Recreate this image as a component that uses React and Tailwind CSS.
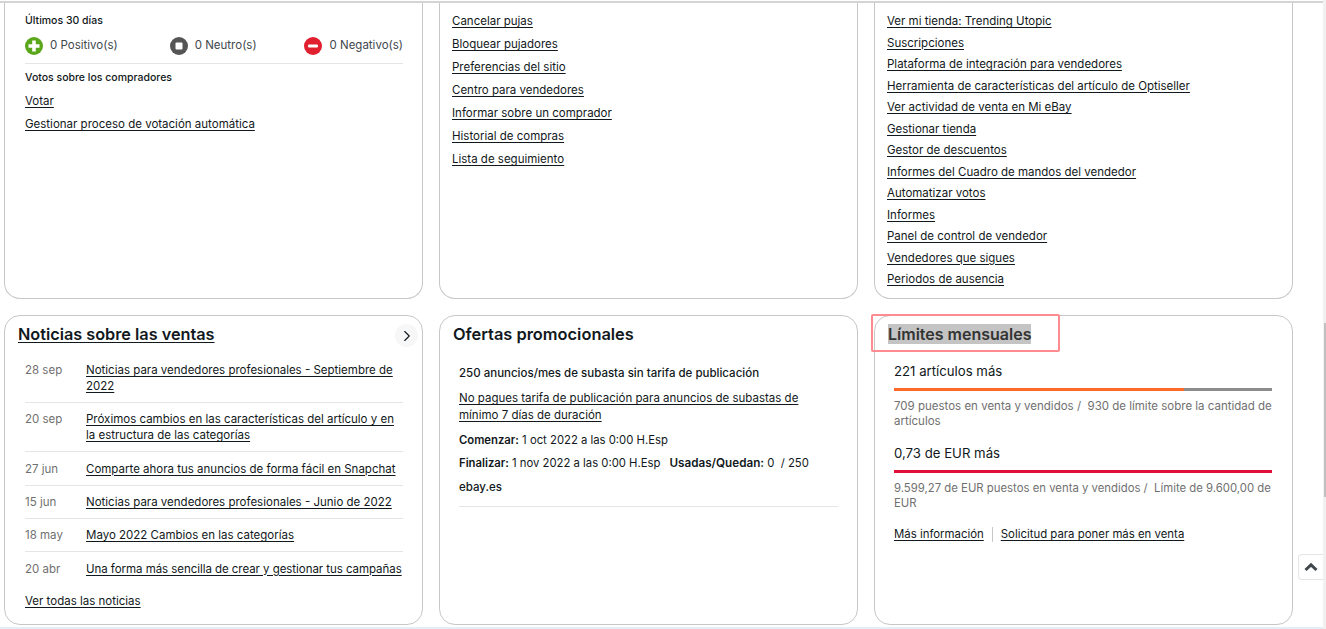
import React from "react";
import { ChevronRight } from "lucide-react";

const font = "font-['Inter','Liberation_Sans',sans-serif]";
const linkClass = "text-[11.5px] leading-[15px] text-[#111820] underline underline-offset-2";

const buyerLinks = [
  "Cancelar pujas",
  "Bloquear pujadores",
  "Preferencias del sitio",
  "Centro para vendedores",
  "Informar sobre un comprador",
  "Historial de compras",
  "Lista de seguimiento",
];

const sellerLinks = [
  "Ver mi tienda: Trending Utopic",
  "Suscripciones",
  "Plataforma de integración para vendedores",
  "Herramienta de características del artículo de Optiseller",
  "Ver actividad de venta en Mi eBay",
  "Gestionar tienda",
  "Gestor de descuentos",
  "Informes del Cuadro de mandos del vendedor",
  "Automatizar votos",
  "Informes",
  "Panel de control de vendedor",
  "Vendedores que sigues",
  "Periodos de ausencia",
];

const news = [
  { date: "28 sep", title: "Noticias para vendedores profesionales - Septiembre de 2022" },
  { date: "20 sep", title: "Próximos cambios en las características del artículo y en la estructura de las categorías" },
  { date: "27 jun", title: "Comparte ahora tus anuncios de forma fácil en Snapchat" },
  { date: "15 jun", title: "Noticias para vendedores profesionales - Junio de 2022" },
  { date: "18 may", title: "Mayo 2022 Cambios en las categorías" },
  { date: "20 abr", title: "Una forma más sencilla de crear y gestionar tus campañas", nowrap: true },
];

const Vote = ({ color, label, kind }) => (
  <div className="flex items-center gap-[7px]">
    <svg width="18" height="18" viewBox="0 0 18 18">
      <circle cx="9" cy="9" r="9" fill={color} />
      {kind === "plus" && <path d="M7.2 3.5h3.6v3.7h3.7v3.6h-3.7v3.7H7.2v-3.7H3.5V7.2h3.7z" fill="#fff" />}
      {kind === "stop" && <rect x="5.5" y="5.5" width="7" height="7" rx="1" fill="#fff" />}
      {kind === "minus" && <rect x="4" y="7.5" width="10" height="3" rx="1" fill="#fff" />}
    </svg>
    <span className="text-[11.5px] text-[#41474d]">{label}</span>
  </div>
);

const cardClass = "border border-[#c7c7c7] bg-white";

export default function App() {
  return (
    <div className={`relative h-[629px] w-[1326px] overflow-hidden bg-white ${font}`}>
      <div className="h-[3px] border-b-2 border-[#d4d4d4]" />

      <div className="grid w-[1293px] grid-cols-3 gap-x-4 gap-y-4 pl-1 grid-rows-[296px_310px]">
        {/* Feedback */}
        <section className={`${cardClass} rounded-b-2xl border-t-0 pt-[11px] pr-[19px] pl-5`}>
          <p className="text-[10.5px] leading-[14px] font-medium text-[#111820]">Últimos 30 días</p>
          <div className="mt-[9px] flex border-b border-[#e5e5e5] pb-[8px]">
            <Vote color="#5ba71b" kind="plus" label="0 Positivo(s)" />
            <div className="ml-[52px]">
              <Vote color="#555555" kind="stop" label="0 Neutro(s)" />
            </div>
            <div className="ml-auto">
              <Vote color="#e0202f" kind="minus" label="0 Negativo(s)" />
            </div>
          </div>
          <p className="mt-[7px] text-[10.5px] leading-[14px] font-medium text-[#111820]">Votos sobre los compradores</p>
          <div className="mt-[9px] flex flex-col gap-[8px]">
            <a className={linkClass}>Votar</a>
            <a className={linkClass}>Gestionar proceso de votación automática</a>
          </div>
        </section>

        {/* Buyer links */}
        <section className={`${cardClass} rounded-b-2xl border-t-0 px-[12px] pt-[11px]`}>
          <div className="flex flex-col items-start gap-[8px]">
            {buyerLinks.map((l) => (
              <a key={l} className={linkClass}>{l}</a>
            ))}
          </div>
        </section>

        {/* Seller links */}
        <section className={`${cardClass} rounded-b-2xl border-t-0 px-[12px] pt-[11px]`}>
          <div className="flex flex-col items-start gap-[6.5px]">
            {sellerLinks.map((l) => (
              <a key={l} className={linkClass}>{l}</a>
            ))}
          </div>
        </section>

        {/* News */}
        <section className={`${cardClass} relative rounded-2xl pt-[8px] pr-[19px] pl-5`}>
          <h2 className="-ml-[7px] text-[16.25px] leading-[20px] font-semibold text-[#111820] underline underline-offset-2">
            Noticias sobre las ventas
          </h2>
          <button className="absolute top-[8px] right-[4px] flex h-[23px] w-[23px] items-center justify-center rounded-full bg-[#f7f7f7]">
            <ChevronRight size={18} strokeWidth={1.5} className="text-[#111820]" />
          </button>
          <ul className="mt-[18px]">
            {news.map((n) => (
              <li key={n.date} className="flex border-b border-[#e5e5e5] py-[8.17px] first:pt-0 last:border-b-0">
                <span className="w-[61px] shrink-0 text-[11.5px] leading-[16px] text-[#707070]">{n.date}</span>
                <a className={`text-[11.5px] leading-[16px] text-[#111820] underline underline-offset-2 ${n.nowrap ? "whitespace-nowrap tracking-[-0.05px]" : ""}`}>
                  {n.title}
                </a>
              </li>
            ))}
          </ul>
          <a className={`${linkClass} mt-[9px] block`}>Ver todas las noticias</a>
        </section>

        {/* Promotions */}
        <section className={`${cardClass} rounded-2xl pt-[8px]`}>
          <h2 className="pl-[13px] text-[16.4px] leading-[20px] font-semibold text-[#111820]">Ofertas promocionales</h2>
          <div className="mx-[19px] mt-[21px] border-b border-[#e5e5e5] pb-[10px] text-[11.5px] leading-[17px] text-[#111820]">
            <p className="font-medium">250 anuncios/mes de subasta sin tarifa de publicación</p>
            <a className="mt-[8px] block underline underline-offset-2">
              No pagues tarifa de publicación para anuncios de subastas de mínimo 7 días de duración
            </a>
            <p className="mt-[8px] text-[11.3px]"><b className="font-semibold">Comenzar:</b> 1 oct 2022 a las 0:00 H.Esp</p>
            <p className="mt-[6px] text-[11.3px]">
              <b className="font-semibold">Finalizar:</b> 1 nov 2022 a las 0:00 H.Esp
              <b className="ml-[9px] text-[11.7px] font-semibold">Usadas/Quedan:</b> 0 &nbsp;/ 250
            </p>
            <p className="mt-[7px] font-medium">ebay.es</p>
          </div>
        </section>

        {/* Limits */}
        <section className={`${cardClass} rounded-2xl pt-[8px]`}>
          <h2 className="pl-[13px] text-[16px] leading-[20px] font-semibold text-[#333]">
            <span className="bg-[#c4c4c4]">Límites mensuales</span>
          </h2>
          <div className="mr-5 ml-[19px]">
            <p className="mt-[17px] text-[13.2px] leading-[20px] text-[#111820]">221 artículos más</p>
            <div className="mt-[7px] flex h-[3px] bg-[#8c8c8c]">
              <div className="h-full w-[290px] bg-[#ff6a2b]" />
            </div>
            <p className="mt-[8px] text-[11.5px] leading-[15px] text-[#707070]">
              709 puestos en venta y vendidos / &nbsp;930 de límite sobre la cantidad de artículos
            </p>
            <p className="mt-[14px] text-[13.2px] leading-[20px] text-[#111820]">0,73 de EUR más</p>
            <div className="mt-[7px] h-[3px] bg-[#e0103a]" />
            <p className="mt-[8px] text-[11.35px] leading-[15px] text-[#707070]">
              9.599,27 de EUR puestos en venta y vendidos / &nbsp;Límite de 9.600,00 de EUR
            </p>
            <div className="mt-[16px] flex items-center text-[11.4px] leading-[15px] text-[#111820]">
              <a className="underline underline-offset-2">Más información</a>
              <span className="mx-2 h-[15px] w-px bg-[#c7c7c7]" />
              <a className="underline underline-offset-2">Solicitud para poner más en venta</a>
            </div>
          </div>
        </section>
      </div>

      {/* bottom page line */}
      <div className="mt-[2px] h-[2px] bg-[#e3eef6]" />

      {/* highlight box */}
      <div className="absolute top-[314px] left-[871px] h-[38px] w-[189px] rounded-[2px] border-2 border-[#ff8a90]" />

      {/* back to top */}
      <button className="absolute top-[554px] left-[1298px] flex h-[26px] w-[25px] items-center justify-center rounded-l-sm border border-r-0 border-[#e5e5e5] bg-white">
        <svg width="14" height="10" viewBox="0 0 14 10">
          <path d="M1.5 8 L7 2.8 L12.5 8" fill="none" stroke="#41474d" strokeWidth="3" />
        </svg>
      </button>

      {/* scrollbar */}
      <div className="absolute top-0 right-0 flex h-[629px] w-[3px] justify-end bg-[#f1f1f1] pt-[323px]">
        <div className="h-[174px] w-[2px] bg-[#c1c1c1]" />
      </div>
    </div>
  );
}
